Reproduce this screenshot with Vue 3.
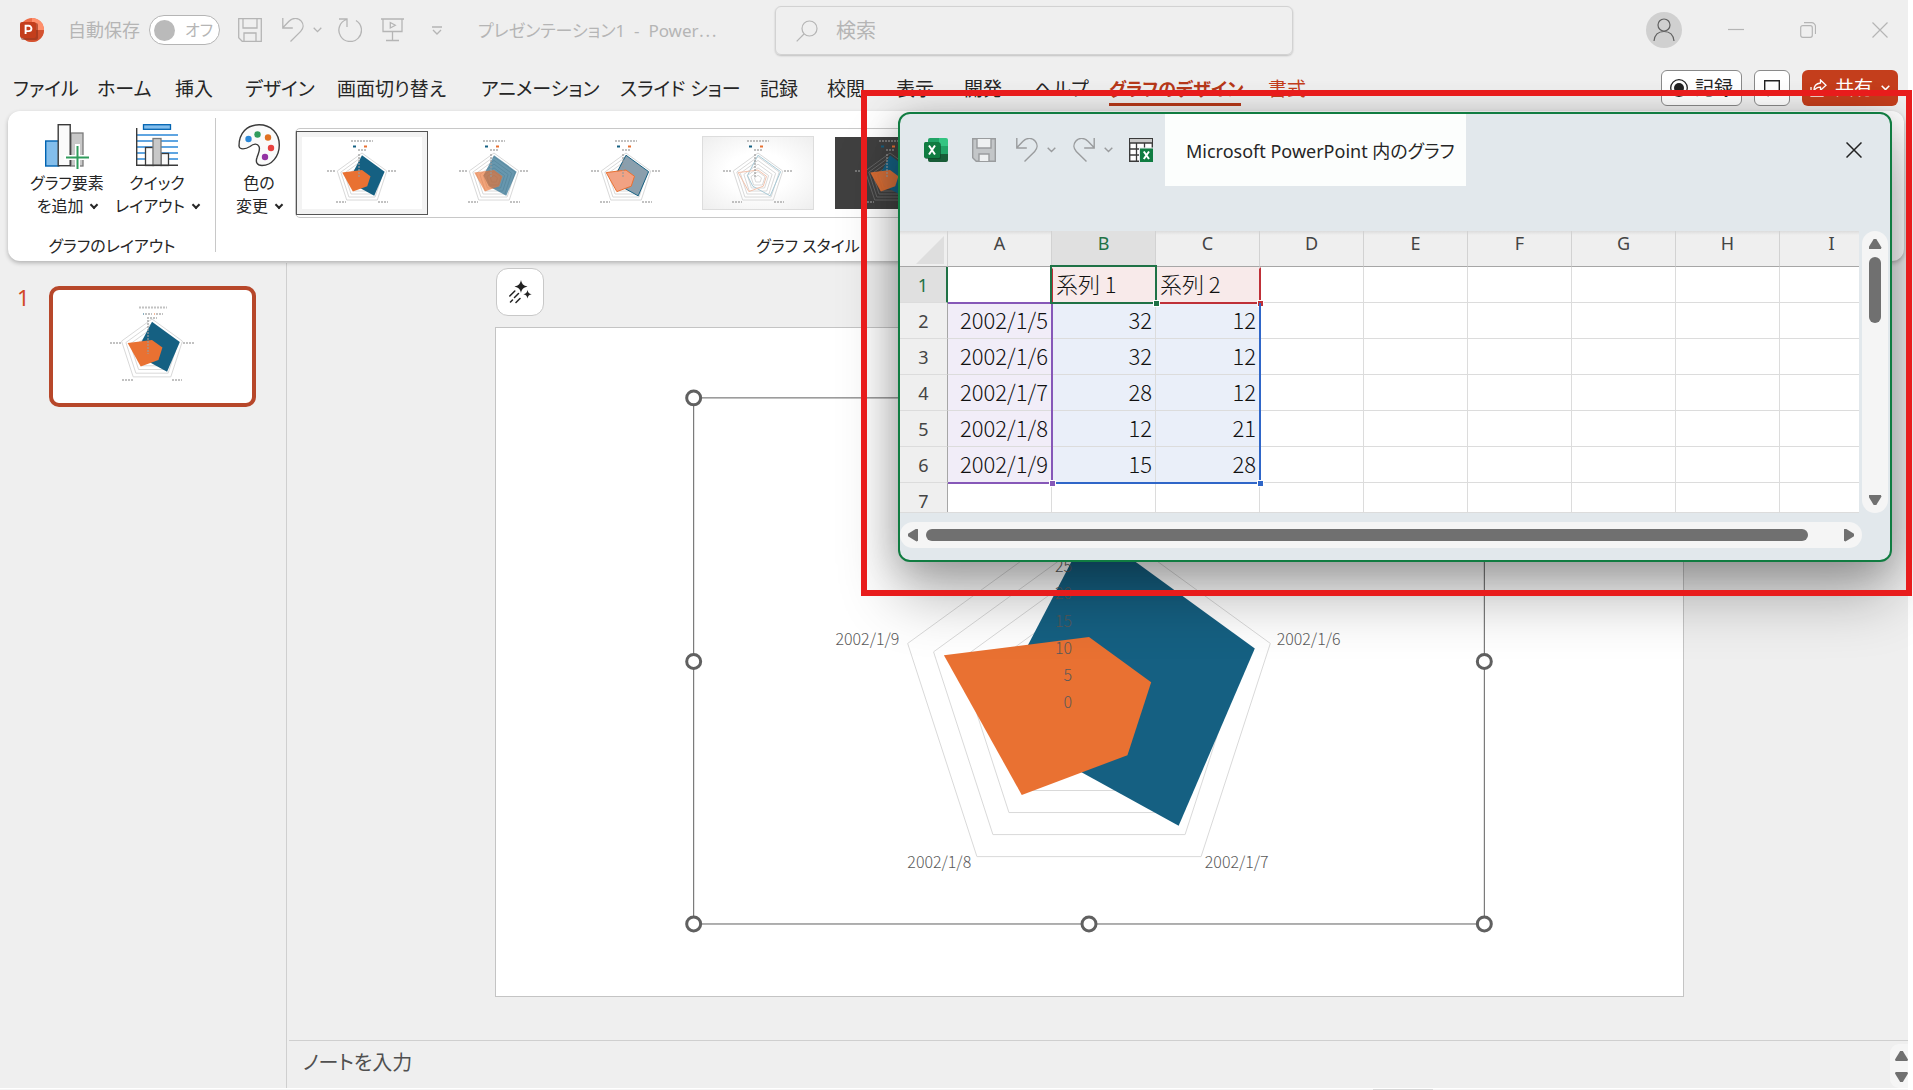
<script setup>
const tabs = [
  { label: 'ファイル' },
  { label: 'ホーム' },
  { label: '挿入' },
  { label: 'デザイン' },
  { label: '画面切り替え' },
  { label: 'アニメーション' },
  { label: 'スライド ショー' },
  { label: '記録' },
  { label: '校閲' },
  { label: '表示' },
  { label: '開発' },
  { label: 'ヘルプ' },
  { label: 'グラフのデザイン', kind: 'active' },
  { label: '書式', kind: 'context' }
]

const columns = ['A', 'B', 'C', 'D', 'E', 'F', 'G', 'H', 'I']
const rows = [
  ['', '系列 1', '系列 2'],
  ['2002/1/5', 32, 12],
  ['2002/1/6', 32, 12],
  ['2002/1/7', 28, 12],
  ['2002/1/8', 12, 21],
  ['2002/1/9', 15, 28],
  ['', '', '']
]

const AXIS_MAX = 35
function polygon(values, cx, cy, radius) {
  return values
    .map((value, i) => {
      const angle = (i * 2 * Math.PI) / 5
      const r = (radius * value) / AXIS_MAX
      return `${(cx + r * Math.sin(angle)).toFixed(2)},${(cy - r * Math.cos(angle)).toFixed(2)}`
    })
    .join(' ')
}
const first = rows.slice(1, 6).map((r) => r[1])
const second = rows.slice(1, 6).map((r) => r[2])
const ringValues = [5, 10, 15, 20, 25, 30, 35]
function radar(cx, cy, radius) {
  return {
    rings: ringValues.map((v) => polygon([v, v, v, v, v], cx, cy, radius)),
    first: polygon(first, cx, cy, radius),
    second: polygon(second, cx, cy, radius)
  }
}
const chart = radar(594, 375, 191)
const small = radar(55, 42, 26)
const slideThumb = radar(99, 61, 32)
const axis = [0, 5, 10, 15, 20, 25, 30, 35].map((v) => ({ v, y: 381 - (v * 191) / AXIS_MAX }))
const handles = [
  [198, 70], [594, 70], [990, 70], [198, 334], [990, 334], [198, 597], [594, 597], [990, 597]
]
const styles = ['solid', 'soft', 'outlined', 'faint', 'dark']
</script>

<template>
  <div class="app">
    <header class="titlebar">
      <div class="quick">
        <svg class="logo" width="24" height="24" viewBox="0 0 24 24" aria-label="PowerPoint">
          <circle cx="12" cy="12" r="12" fill="#ed6c47" />
          <path d="M12 0a12 12 0 0 1 12 12H12z" fill="#ff8f6b" />
          <path d="M0 12h24a12 12 0 0 1-24 0z" fill="#d35230" />
          <rect x="1" y="5" width="17" height="17" rx="2" fill="#8f2f16" opacity=".6" />
          <rect y="4" width="16" height="16" rx="2" fill="#c43e1c" />
          <path d="M5.6 16V7.8h3.2a2.6 2.6 0 0 1 0 5.3H5.6" fill="none" stroke="#fff" stroke-width="1.9" />
        </svg>
        <label class="autosave">
          <span>自動保存</span>
          <input type="checkbox" role="switch" />
          <span class="switch"><i></i>オフ</span>
        </label>
        <button class="ic save" aria-label="上書き保存">
          <svg width="24" height="24" viewBox="0 0 24 24"><path d="M.7.7h22.600v22.600H4.200L.7 19.800zM5 1v9h14V1M6 23v-8h12v8" /></svg>
        </button>
        <button class="ic undo" aria-label="元に戻す">
          <svg width="22" height="24" viewBox="0 0 22 24"><path d="M.8 0v10h10M1 9.500 7 3.200C11-.8 16.500-.2 19.300 3.200c2.600 3.300 2.200 7.400-.6 10.200L8.500 23.500" /></svg>
        </button>
        <button class="ic more" aria-label="元に戻す一覧">
          <svg width="9" height="6" viewBox="0 0 9 6"><path d="m.7.7 3.800 3.900L8.300.7" /></svg>
        </button>
        <button class="ic redo" aria-label="繰り返し">
          <svg width="24" height="24" viewBox="0 0 24 24"><path d="M1 1h8v8M8.500 1.500A11.300 11.300 0 1 0 18 2.500" /></svg>
        </button>
        <button class="ic present" aria-label="先頭から開始">
          <svg width="23" height="24" viewBox="0 0 23 24"><path d="M0 1h23M2 1v12.500h19V1M11.500 14v8M5 22.500h13M9.300 4.500v5.500l5-2.700z" /></svg>
        </button>
        <button class="ic custom" aria-label="クイック アクセスのカスタマイズ">
          <svg width="10" height="9" viewBox="0 0 10 9"><path d="M0 1h10M1 4l4 4 4-4" /></svg>
        </button>
        <span class="doc">プレゼンテーション1 &nbsp;-&nbsp; Power<span class="ellipsis">…</span></span>
      </div>
      <label class="search">
        <svg width="22" height="22" viewBox="0 0 22 22"><circle cx="13.500" cy="8.500" r="7.500" /><path d="M8 14 .7 21.300" /></svg>
        <input type="search" placeholder="検索" aria-label="検索" />
      </label>
      <div class="window-controls">
        <button class="avatar" aria-label="アカウント">
          <svg width="22" height="24" viewBox="0 0 22 24"><circle cx="11" cy="7" r="6" /><path d="M1 23c.6-6 4.500-9.500 10-9.500S20.400 17 21 23" /></svg>
        </button>
        <button aria-label="最小化"><svg width="16" height="16" viewBox="0 0 16 16"><path d="M0 7.500h16" /></svg></button>
        <button aria-label="元のサイズに戻す"><svg width="16" height="16" viewBox="0 0 16 16"><rect x=".7" y="3.700" width="11.600" height="11.600" rx="2" /><path d="M4 .7h7.500a4 4 0 0 1 4 4V12" /></svg></button>
        <button aria-label="閉じる"><svg width="16" height="16" viewBox="0 0 16 16"><path d="m.5.500 15 15M15.500.500l-15 15" /></svg></button>
      </div>
    </header>

    <div class="tabbar">
      <nav class="tabs">
        <a v-for="tab in tabs" :key="tab.label" href="#" :class="tab.kind"><span>{{ tab.label }}</span></a>
      </nav>
      <div class="actions">
        <button class="record">
          <svg width="18" height="18" viewBox="0 0 18 18"><circle cx="9" cy="9" r="8.300" fill="none" stroke="#222" stroke-width="1.300" /><circle cx="9" cy="9" r="5" fill="#222" /></svg>
          記録
        </button>
        <button class="comment" aria-label="コメント">
          <svg width="16" height="18" viewBox="0 0 16 18"><path d="M.7 1.700h14.600v11H8l-3.500 3.500v-3.500H.7z" fill="none" stroke="#222" stroke-width="1.400" /></svg>
        </button>
        <button class="share">
          <svg width="17" height="18" viewBox="0 0 17 18"><path d="M1 8v9h12v-4M10.500 1l5.500 5.200-5.500 5V8.200C7.500 8 5.400 9.300 3.800 12c0-4.700 2.700-7.700 6.700-8z" fill="none" stroke="#fff" stroke-width="1.300" /></svg>
          共有
          <svg width="9" height="6" viewBox="0 0 9 6"><path d="m.7.7 3.800 3.900L8.300.7" fill="none" stroke="#fff" stroke-width="1.500" /></svg>
        </button>
      </div>
    </div>

    <section class="ribbon">
      <div class="group layout-group">
        <div class="tools">
          <button class="tool">
            <svg width="44" height="46" viewBox="0 0 44 46">
              <rect x="26" y="9" width="12" height="33" fill="#c8c8c8" stroke="#7a7a7a" stroke-width="1.300" />
              <rect x=".7" y="17" width="13" height="25" fill="#83beec" stroke="#0063b1" stroke-width="1.400" />
              <rect x="13.200" y=".7" width="12" height="41" fill="#fafafa" stroke="#3a3a3a" stroke-width="1.400" />
              <path d="M32.500 20v26M19 33.500h25" stroke="#fff" stroke-width="5" />
              <path d="M32.500 22v23M21 33.500h23" stroke="#309c5c" stroke-width="2" />
            </svg>
            <span>グラフ要素</span>
            <span>を追加 <i class="chev"></i></span>
          </button>
          <button class="tool">
            <svg width="42" height="46" viewBox="0 0 42 46">
              <path d="M1 11h41M1 17h41M1 23h41M1 29h41M1 35h41" stroke="#2b88d8" stroke-width="1.500" />
              <rect x="7.500" y=".7" width="27" height="4.600" fill="#83beec" stroke="#0063b1" stroke-width="1.300" />
              <rect x="9.500" y="23.500" width="8" height="18" fill="#fafafa" stroke="#3a3a3a" stroke-width="1.300" />
              <rect x="25" y="29.500" width="7.500" height="12" fill="#fafafa" stroke="#3a3a3a" stroke-width="1.300" />
              <rect x="17" y="14.500" width="8" height="27" fill="#c8c8c8" stroke="#7a7a7a" stroke-width="1.300" />
              <path d="M.7 4v37.300H42" fill="none" stroke="#3a3a3a" stroke-width="1.400" />
            </svg>
            <span>クイック</span>
            <span>レイアウト <i class="chev"></i></span>
          </button>
        </div>
        <p class="caption">グラフのレイアウト</p>
      </div>
      <div class="group style-group">
        <div class="tools">
          <button class="tool">
            <svg width="42" height="46" viewBox="0 0 42 46">
              <path d="M1 22C1 9 9 .8 21 .8c12 0 20.300 8.600 20.300 20.200 0 11-7.300 20.500-17.300 20.500-5.500 0-6.500-4-5-8 1.800-5.300 3.500-7.500 2-11-1.600-3.500-5.500-2.800-9 0C7.500 25.500 1.500 26 1 22z" fill="#fafafa" stroke="#3a3a3a" stroke-width="1.400" />
              <circle cx="10.500" cy="15" r="3.200" fill="#2b88d8" /><circle cx="19.500" cy="10.500" r="3.200" fill="#309c5c" />
              <circle cx="30" cy="13.500" r="3.200" fill="#e07020" /><circle cx="33" cy="24" r="3.200" fill="#e8413f" /><circle cx="27" cy="33" r="3.200" fill="#9332a3" />
            </svg>
            <span>色の</span>
            <span>変更 <i class="chev"></i></span>
          </button>
          <div class="gallery">
            <button v-for="s in styles" :key="s" class="style" :class="s" :aria-label="'スタイル ' + s">
              <svg width="110" height="72" viewBox="0 0 110 72">
                <polygon v-for="(p, i) in small.rings" :key="i" class="ring" :points="p" />
                <polygon class="s1" :points="small.first" />
                <polygon class="s2" :points="small.second" />
                <path class="ticks" d="M44 4h22M51 13h8M20 34h9M81 34h9M29 65h10M71 65h10M52 17v24" />
                <path class="k1" d="M46 9.500h3" /><path class="k2" d="M57 9.500h3" />
              </svg>
            </button>
          </div>
        </div>
        <p class="caption">グラフ スタイル</p>
      </div>
    </section>

    <div class="workspace">
      <aside class="slides">
        <span class="number">1</span>
        <button class="slide-thumb" aria-label="スライド 1">
          <svg viewBox="0 0 199 113">
            <polygon v-for="(p, i) in slideThumb.rings" :key="i" class="ring" :points="p" />
            <polygon class="s1" :points="slideThumb.first" />
            <polygon class="s2" :points="slideThumb.second" />
            <path class="ticks" d="M86 17.500h28M92 24h7M103 24h7M94 28h10M57 53h11M130 53h11M69 90h11M119 90h10M95 30v34" />
            <path d="M90 24h1" stroke="#156082" /><path d="M101 24h1" stroke="#e97132" />
          </svg>
        </button>
      </aside>
      <main class="editor">
        <div class="stage">
          <button class="designer" aria-label="デザイナー">
            <svg width="23" height="24" viewBox="0 0 23 24">
              <path d="M12 0c.9 4 2.200 5.500 6.500 6.500C14.200 7.500 12.900 9 12 13c-.9-4-2.200-5.500-6.500-6.500C9.800 5.500 11.100 4 12 0zM18.500 10c.6 2.700 1.500 3.600 4.200 4.200-2.700.6-3.600 1.500-4.200 4.200-.6-2.700-1.500-3.600-4.200-4.200 2.700-.6 3.600-1.500 4.200-4.200z" fill="#222" />
              <path d="m.8 16 5-5M5.500 17.500l4-4M1.500 22l2-2M7 22.500l4-4" stroke="#222" stroke-width="1.500" stroke-linecap="round" />
            </svg>
          </button>
          <div class="slide">
            <svg viewBox="0 0 1189 669" class="chart">
              <polygon v-for="(p, i) in chart.rings" :key="i" class="ring" :points="p" />
              <polygon class="s1" :points="chart.first" />
              <polygon class="s2" :points="chart.second" />
              <g class="labels">
                <text v-for="a in axis" :key="a.v" x="577" :y="a.y" text-anchor="end">{{ a.v }}</text>
                <text x="404" y="318" text-anchor="end">2002/1/9</text>
                <text x="782" y="318">2002/1/6</text>
                <text x="476" y="541" text-anchor="end">2002/1/8</text>
                <text x="710" y="541">2002/1/7</text>
              </g>
              <rect x="198" y="70" width="792" height="527" fill="none" stroke="#606060" />
              <circle v-for="(h, i) in handles" :key="i" :cx="h[0]" :cy="h[1]" r="7" fill="#fff" stroke="#606060" stroke-width="3" />
            </svg>
          </div>
        </div>
        <div class="notes">
          <textarea placeholder="ノートを入力" aria-label="ノート"></textarea>
          <div class="notes-scroll"><i class="tri up"></i><i class="tri down"></i></div>
        </div>
      </main>
    </div>
    <footer class="bottom"><i></i></footer>

    <section class="sheet" aria-label="Microsoft PowerPoint 内のグラフ">
      <header class="sheet-title">
        <div class="sheet-tools">
          <svg width="24" height="24" viewBox="0 0 24 24">
            <path d="M6 0h9v8H4V2a2 2 0 0 1 2-2z" fill="#21a366" /><path d="M15 0h7a2 2 0 0 1 2 2v6h-9z" fill="#33c481" />
            <path d="M4 8h11v8H4z" fill="#107c41" /><path d="M15 8h9v8h-9z" fill="#21a366" /><path d="M4 16h20v6a2 2 0 0 1-2 2H6a2 2 0 0 1-2-2z" fill="#185c37" />
            <rect x="1" y="5" width="16" height="16" rx="1.500" fill="#0b4526" opacity=".6" />
            <rect y="4" width="16" height="16" rx="1.500" fill="#107c41" />
            <path d="m5 7.500 6 9M11 7.500l-6 9" stroke="#fff" stroke-width="2" />
          </svg>
          <button class="sheet-save" aria-label="保存"><svg width="24" height="24" viewBox="0 0 24 24"><path d="M.7.700h22.600v22.600H4.200L.7 19.800z" fill="#c3c6c8" /><path d="M5 1v9h14V1M7 23v-7h10v7" fill="#eef0f1" /></svg></button>
          <button class="sheet-undo" aria-label="元に戻す"><svg width="22" height="24" viewBox="0 0 22 24"><path d="M.8 0v10h10M1 9.500 7 3.200C11-.8 16.500-.2 19.300 3.200c2.600 3.300 2.200 7.400-.6 10.200L8.500 23.500" /></svg></button>
          <svg class="small-chev" width="9" height="6" viewBox="0 0 9 6"><path d="m.7.7 3.800 3.900L8.300.7" /></svg>
          <button class="sheet-redo" aria-label="やり直し"><svg width="22" height="24" viewBox="0 0 22 24"><path d="M21.200 0v10h-10M21 9.500l-6-6.300C11-.8 5.500-.2 2.700 3.200.1 6.500.5 10.600 3.300 13.400l10.200 10.100" /></svg></button>
          <svg class="small-chev" width="9" height="6" viewBox="0 0 9 6"><path d="m.7.7 3.800 3.900L8.300.7" /></svg>
          <button class="sheet-edit" aria-label="Excel でデータを編集">
            <svg width="24" height="24" viewBox="0 0 24 24">
              <path d="M.7.700h22.600v22.600H.7z" fill="#fff" stroke="#3a3a3a" stroke-width="1.400" /><path d="M1 1h22v4H1z" fill="#c8c8c8" />
              <path d="M1 5h22M1 11h10M1 17h10M7.500 5v18M15.500 5v5" stroke="#3a3a3a" stroke-width="1.300" fill="none" />
              <rect x="10" y="9.500" width="14.500" height="15" fill="#e2e8ec" /><rect x="11" y="10.500" width="13" height="13.500" fill="#107c41" />
              <path d="m14.800 13.500 5.200 7.500M20 13.500 14.800 21" class="edit-mark" />
            </svg>
          </button>
        </div>
        <h2>Microsoft PowerPoint 内のグラフ</h2>
        <button class="sheet-close" aria-label="閉じる"><svg width="16" height="16" viewBox="0 0 16 16"><path d="m.5.500 15 15M15.500.500l-15 15" /></svg></button>
      </header>
      <div class="sheet-body">
        <div class="grid">
          <table>
            <colgroup><col class="row-col" /><col v-for="c in columns" :key="c" class="data-col" /></colgroup>
            <thead>
              <tr>
                <th class="corner"><svg width="28" height="28" viewBox="0 0 28 28"><path d="M28 0v28H0z" fill="#dedede" /></svg></th>
                <th v-for="c in columns" :key="c" scope="col" :class="{ current: c === 'B' }">{{ c }}</th>
              </tr>
            </thead>
            <tbody>
              <tr v-for="(row, r) in rows" :key="r">
                <th scope="row" :class="{ current: r === 0 }">{{ r + 1 }}</th>
                <td v-for="(c, i) in columns" :key="c" :class="{
                  names: r === 0 && (i === 1 || i === 2),
                  dates: r > 0 && r < 6 && i === 0,
                  values: r > 0 && r < 6 && (i === 1 || i === 2)
                }">{{ row[i] }}</td>
              </tr>
            </tbody>
          </table>
          <div class="range names-range"></div>
          <div class="range values-range"></div>
          <div class="range dates-range"></div>
          <div class="range cursor"></div>
        </div>
        <div class="vscroll"><i class="tri up"></i><i class="thumb"></i><i class="tri down"></i></div>
      </div>
      <div class="hscroll"><i class="tri left"></i><i class="thumb"></i><i class="tri right"></i></div>
    </section>

    <div class="highlight"></div>
  </div>
</template>

<style>
body { background: #fff; }
</style>

<style scoped>
* { box-sizing: border-box; }
.app {
  position: relative;
  display: flex;
  flex-direction: column;
  height: 100vh;
  padding-right: 5px;
  overflow: hidden;
  background: linear-gradient(#efefef, #efefef) left / calc(100% - 5px) 100% no-repeat;
  color: #262626;
  font-family: "Noto Sans", "Noto Sans CJK JP", sans-serif;
  font-size: 18px;
  line-height: 24px;
  font-feature-settings: "palt";
}
button, input, textarea { margin: 0; padding: 0; border: 0; background: none; font: inherit; color: inherit; font-feature-settings: inherit; }
button { display: flex; align-items: center; justify-content: center; flex: none; white-space: nowrap; }
svg { display: block; flex: none; }
p, h2 { margin: 0; font-weight: 400; }
i { display: block; flex: none; }

.titlebar { display: grid; grid-template-columns: 775px minmax(200px, 518px) 1fr; height: 60px; flex: none; }
.quick { display: flex; align-items: center; padding-left: 20px; color: #b5b5b5; white-space: nowrap; overflow: hidden; }
.ic svg { fill: none; stroke: #b5b5b5; stroke-width: 1.3; }
.autosave { position: relative; display: flex; align-items: center; gap: 9px; margin-left: 24px; }
.autosave input { position: absolute; right: 0; opacity: 0; width: 71px; height: 30px; }
.switch { display: flex; align-items: center; gap: 10px; width: 71px; height: 30px; padding-left: 4px; border: 1px solid #b5b5b5; border-radius: 15px; background: #fff; font-size: 16px; }
.switch i { width: 21px; height: 21px; border-radius: 50%; background: #bababa; }
.save { margin-left: 18px; }
.undo { margin-left: 20px; }
.more { margin-left: 9px; }
.redo { margin-left: 16px; }
.present { margin-left: 19px; }
.custom { margin-left: 28px; }
.doc { margin-left: 36px; font-size: 17px; }
.ellipsis { font-family: "Noto Sans CJK JP", sans-serif; font-feature-settings: normal; }
.search { display: flex; align-items: center; gap: 18px; height: 49px; margin-top: 6px; padding-left: 20px; border: 1px solid #d2d2d2; border-radius: 6px; box-shadow: 0 1px 2px rgba(0, 0, 0, .2); }
.search svg { fill: none; stroke: #b5b5b5; stroke-width: 1.2; }
.search input { flex: 1; min-width: 0; outline: 0; font-size: 20px; }
.search input::placeholder { color: #b5b5b5; opacity: 1; }
.window-controls { display: flex; align-items: center; justify-content: flex-end; padding-right: 20px; gap: 56px; }
.window-controls svg { fill: none; stroke: #b5b5b5; stroke-width: 1.2; }
.window-controls .avatar { width: 36px; height: 36px; margin-right: -10px; border-radius: 50%; background: #d0d0d0; }
.window-controls .avatar svg { stroke: #606060; }

.tabbar { display: flex; justify-content: space-between; height: 51px; flex: none; }
.tabs { display: grid; grid-template-columns: 84px 78px 70px 92px 144px 139px 140px 67px 69px 68px 70px 75px 159px 60px; padding-left: 13px; font-size: 19px; }
.tabs a { padding-top: 17px; color: inherit; text-decoration: none; white-space: nowrap; }
.tabs .active { color: #b7391a; font-weight: 700; font-size: 18px; }
.tabs .active span { display: block; width: 132px; padding-bottom: 2px; border-bottom: 3px solid #b7391a; }
.tabs .context { color: #c43e1c; }
.actions { display: flex; gap: 12px; padding: 10px 10px 0 0; }
.actions button { height: 36px; border: 1px solid #8a8a8a; border-radius: 6px; background: #fff; font-size: 19px; gap: 7px; }
.actions .record { width: 81px; }
.actions .comment { width: 36px; }
.actions .share { width: 96px; border: 0; background: #c43e1c; color: #fff; gap: 8px; }

.ribbon { display: flex; flex: none; height: 150px; margin: 0 4px 0 8px; border-radius: 12px; background: #fff; box-shadow: 0 2px 4px rgba(0, 0, 0, .25); font-size: 16px; position: relative; }
.group { display: flex; flex-direction: column; justify-content: space-between; padding: 13px 0 3px; position: relative; }
.layout-group { width: 208px; }
.layout-group::after { content: ""; position: absolute; right: 0; top: 7px; bottom: 9px; width: 1px; background: #c8c8c8; }
.style-group { width: 1184px; }
.tools { display: flex; }
.layout-group .tools { padding-left: 14px; }
.style-group .tools { padding-left: 15px; }
.tool { display: flex; flex-direction: column; width: 90px; line-height: 23px; }
.style-group .tool { width: 56px; margin-right: 8px; }
.tool svg { margin-bottom: 2px; }
.tool span { display: flex; align-items: center; gap: 8px; }
.chev { width: 6px; height: 6px; margin-top: -4px; border: solid #262626; border-width: 0 2px 2px 0; transform: rotate(45deg); }
.caption { text-align: center; line-height: 24px; }
.gallery { display: flex; align-items: center; flex: 1; height: 90px; margin-top: 4px; border: 1px solid #c8c8c8; border-radius: 5px; }
.style { width: 132px; height: 84px; }
.style.solid { background: #f3f3f3; border: 1px solid #555; }
.solid svg { background: #fff; width: 120px; height: 72px; }
.faint svg { background: radial-gradient(#fff 40%, #eee); outline: 1px solid #ddd; }
.dark svg { background: #404040; }
.ring { fill: none; stroke: #d9d9d9; stroke-width: 1; }
.s1 { fill: #156082; }
.s2 { fill: #e97132; }
.ticks { fill: none; stroke: #999; stroke-width: 2; stroke-dasharray: 2 1; opacity: .6; }
.k1 { stroke: #156082; stroke-width: 2; }
.k2 { stroke: #e97132; stroke-width: 2; }
.soft .s1, .soft .s2 { opacity: .65; }
.outlined .s1 { fill: #8a9fad; stroke: #156082; }
.outlined .s2 { fill: #f2a283; stroke: #e97132; }
.faint .s1 { fill: none; stroke: #a9cad6; }
.faint .s2 { fill: none; stroke: #f3c3ad; }
.dark .ring { stroke: #666; }
.dark .s2 { opacity: .9; }

.workspace { display: flex; flex: 1; min-height: 0; margin-top: 2px; }
.slides { display: flex; align-items: flex-start; width: 287px; padding: 23px 30px 0 17px; border-right: 1px solid #cfcfcf; }
.number { width: 32px; color: #d24726; font-size: 22px; line-height: 22px; }
.slide-thumb { flex: 1; height: 121px; border: 4px solid #b7472a; border-radius: 10px; background: #fff; }
.slide-thumb svg { width: 100%; }
.editor { display: flex; flex-direction: column; flex: 1; min-width: 0; }
.stage { flex: 1; min-height: 0; padding: 5px 224px 0 208px; }
.designer { width: 48px; height: 48px; margin-left: 1px; border: 1px solid #c8c8c8; border-radius: 12px; background: #fff; }
.slide { margin-top: 11px; border: 1px solid #c4c4c4; background: #fff; }
.chart { width: 100%; height: auto; }
.labels { fill: #595959; font-family: "Noto Sans CJK JP", sans-serif; font-size: 16px; font-weight: 300; }
.notes { display: flex; height: 48px; margin-left: 2px; border-top: 1px solid #cfcfcf; }
.notes textarea { flex: 1; resize: none; outline: 0; padding: 8px 0 0 14px; font-size: 20px; line-height: 28px; overflow: hidden; }
.notes textarea::placeholder { color: #505050; opacity: 1; }
.notes-scroll { display: flex; flex-direction: column; align-items: center; justify-content: space-between; width: 18px; margin-top: 3px; padding: 7px 0 6px 5px; border-radius: 9px 0 0 9px; background: #f5f5f5; }
.bottom { flex: none; height: 2px; border-top: 1px solid #fff; background: #f5f5f5; }
.bottom i { width: 60px; height: 1px; margin-left: 1373px; background: #d8d8d8; }

.tri { background: #707070; }
.tri.up { width: 13px; height: 10px; clip-path: polygon(40% 0, 60% 0, 100% 85%, 95% 100%, 5% 100%, 0 85%); }
.tri.down { width: 13px; height: 10px; clip-path: polygon(5% 0, 95% 0, 100% 15%, 60% 100%, 40% 100%, 0 15%); }
.tri.left { width: 10px; height: 13px; clip-path: polygon(0 40%, 0 60%, 85% 100%, 100% 95%, 100% 5%, 85% 0); }
.tri.right { width: 10px; height: 13px; clip-path: polygon(0 5%, 0 95%, 15% 100%, 100% 60%, 100% 40%, 15% 0); }

.sheet { position: absolute; top: 112px; left: 898px; right: 21px; display: flex; flex-direction: column; height: 450px; border: 2px solid #107c41; border-radius: 12px; background: #e2e8ec; box-shadow: 0 34px 60px rgba(0, 0, 0, .3), 0 4px 36px rgba(0, 0, 0, .2); }
.sheet-title { display: flex; height: 117px; flex: none; align-items: flex-start; }
.sheet-tools { display: flex; align-items: center; width: 265px; height: 72px; padding-left: 24px; }
.sheet-tools button svg, .small-chev { fill: none; stroke: #9a9c9e; stroke-width: 1.4; }
.sheet-tools .sheet-edit svg { stroke: none; }
.edit-mark { stroke: #fff; stroke-width: 2; }
.sheet-save { margin-left: 24px; }
.sheet-undo { margin-left: 20px; }
.small-chev { margin-left: 9px; }
.sheet-redo { margin-left: 17px; }
.sheet-edit { margin-left: 16px; }
.sheet-title h2 { height: 72px; width: 301px; padding-left: 21px; background: #fcfefd; font-size: 18px; line-height: 74px; white-space: nowrap; }
.sheet-close { height: 72px; width: 72px; margin-left: auto; }
.sheet-close svg { fill: none; stroke: #222; stroke-width: 1.5; }
.sheet-body { display: flex; gap: 3px; height: 282px; padding-right: 2px; }
.grid { position: relative; flex: 1; min-width: 0; overflow: hidden; background: #fff; border-bottom: 1px solid #dcdcdc; }
table { width: 984px; border-collapse: separate; border-spacing: 0; table-layout: fixed; }
.row-col { width: 48px; }
.data-col { width: 104px; }
th { height: 36px; padding: 0; background: #efefef; font-weight: 400; color: #444; text-align: center; border-bottom: 1px solid #dcdcdc; border-right: 1px solid #a6a6a6; }
thead th { border-bottom-color: #a6a6a6; border-right-color: #d2d2d2; padding-bottom: 11px; line-height: 20px; background: linear-gradient(#dcdcdc, #efefef 4px); }
tbody th { padding-top: 1px; line-height: 24px; }
th.corner { padding: 5px 3px 2px 16px; }
th.current { background: #e0e0e0; color: #1f7246; }
tbody th.current { border-right: 2px solid #1f7246; }
td { height: 36px; padding: 0 3px 4px 4px; border-right: 1px solid #dcdcdc; border-bottom: 1px solid #dcdcdc; font-family: "Noto Sans CJK JP", sans-serif; font-size: 22px; font-weight: 300; line-height: 28px; text-align: right; color: #111; white-space: nowrap; }
.names { background: #f8eaea; text-align: left; }
.dates { background: #f1edf8; }
.values { background: #eaeff9; }
.range { position: absolute; border: 2px solid; }
.range::after { content: ""; position: absolute; right: -4px; bottom: -4px; width: 5px; height: 5px; background: currentColor; outline: 1px solid #fff; }
.names-range { left: 151px; top: 36px; width: 210px; height: 37px; color: #bf3038; border-top-color: transparent; }
.values-range { left: 151px; top: 72px; width: 210px; height: 181px; color: #2f66c8; border-top: 0; border-left: 0; }
.dates-range { left: 48px; top: 71px; width: 105px; height: 182px; color: #8658b8; border-left: 0; }
.cursor { left: 150px; top: 34px; width: 107px; height: 39px; color: #1f7246; }
.vscroll { display: flex; flex-direction: column; align-items: center; width: 26px; padding: 8px 0; border-radius: 13px; background: #f5f5f5; }
.vscroll .thumb { width: 12px; height: 66px; margin: 8px 0 auto; border-radius: 6px; background: #707070; }
.hscroll { display: flex; align-items: center; height: 26px; margin: 9px 28px 0 0; padding: 0 8px; border-radius: 13px; background: #f5f5f5; }
.hscroll .thumb { flex: 1; height: 12px; margin: 0 36px 0 8px; border-radius: 6px; background: #707070; }
.highlight { position: absolute; top: 90px; left: 861px; right: 1px; height: 506px; border: 6px solid #e81c1c; pointer-events: none; }
</style>
